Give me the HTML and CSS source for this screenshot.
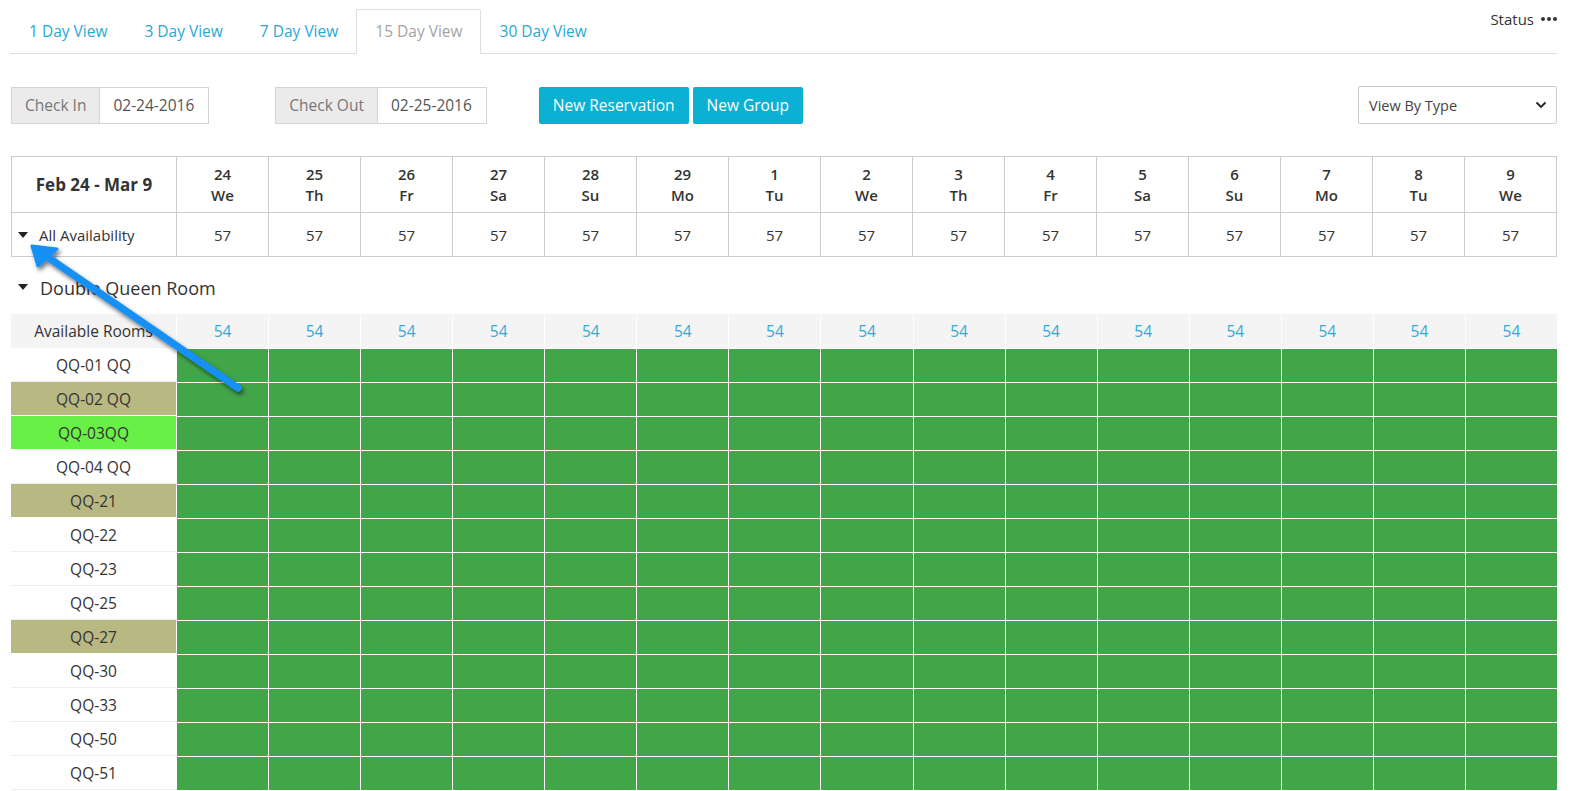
FILE: index.html
```html
<!DOCTYPE html>
<html>
<head>
<meta charset="utf-8">
<link rel="stylesheet" href="styles.css">
</head>
<body>
<div class="page">
  <div class="tabbar">
    <ul class="tabs">
      <li class="tab">1 Day View</li>
      <li class="tab">3 Day View</li>
      <li class="tab">7 Day View</li>
      <li class="tab active">15 Day View</li>
      <li class="tab">30 Day View</li>
    </ul>
    <div class="status">Status <span class="dots"><i></i><i></i><i></i></span></div>
  </div>

  <div class="controls">
    <div class="group">
      <span class="addon">Check In</span>
      <span class="field">02-24-2016</span>
    </div>
    <div class="group group-out">
      <span class="addon">Check Out</span>
      <span class="field">02-25-2016</span>
    </div>
    <div class="buttons">
      <button class="btn">New Reservation</button>
      <button class="btn">New Group</button>
    </div>
    <div class="select">
      <span>View By Type</span>
      <svg width="12" height="8" viewBox="0 0 12 8"><path d="M1.5 1.5 L6 6 L10.5 1.5" fill="none" stroke="#222" stroke-width="1.8"/></svg>
    </div>
  </div>

  <table class="summary">
    <tr class="head">
      <th class="range">Feb 24 - Mar 9</th>
      <th>24<br>We</th><th>25<br>Th</th><th>26<br>Fr</th><th>27<br>Sa</th><th>28<br>Su</th>
      <th>29<br>Mo</th><th>1<br>Tu</th><th>2<br>We</th><th>3<br>Th</th><th>4<br>Fr</th>
      <th>5<br>Sa</th><th>6<br>Su</th><th>7<br>Mo</th><th>8<br>Tu</th><th>9<br>We</th>
    </tr>
    <tr class="avail">
      <td class="label"><span class="caret"></span>All Availability</td>
      <td>57</td><td>57</td><td>57</td><td>57</td><td>57</td><td>57</td><td>57</td><td>57</td>
      <td>57</td><td>57</td><td>57</td><td>57</td><td>57</td><td>57</td><td>57</td>
    </tr>
  </table>

  <div class="section-title"><span class="caret big"></span>Double Queen Room</div>

  <div class="grid" id="grid">
    <div class="rlabel avail-label">Available Rooms</div>
    <div class="num">54</div><div class="num">54</div><div class="num">54</div><div class="num">54</div><div class="num">54</div>
    <div class="num">54</div><div class="num">54</div><div class="num">54</div><div class="num">54</div><div class="num">54</div>
    <div class="num">54</div><div class="num">54</div><div class="num">54</div><div class="num">54</div><div class="num">54</div>
  </div>
</div>

<svg class="annot" width="300" height="420" viewBox="0 0 300 420">
  <defs>
    <filter id="sh" x="-20%" y="-20%" width="140%" height="140%">
      <feDropShadow dx="2" dy="3" stdDeviation="2" flood-color="#000" flood-opacity="0.55"/>
    </filter>
  </defs>
  <g filter="url(#sh)">
    <line x1="238" y1="388" x2="46" y2="256" stroke="#1690f5" stroke-width="7" stroke-linecap="round"/>
    <polygon points="32,246 57,249 38,266" fill="#1690f5" stroke="#1690f5" stroke-width="3" stroke-linejoin="round"/>
  </g>
</svg>

<script src="app.js"></script>
</body>
</html>
```

FILE: app.js
```js
(function () {
  var rooms = [
    ["QQ-01 QQ", ""], ["QQ-02 QQ", "tan"], ["QQ-03QQ", "lime"], ["QQ-04 QQ", ""],
    ["QQ-21", "tan"], ["QQ-22", ""], ["QQ-23", ""], ["QQ-25", ""], ["QQ-27", "tan"],
    ["QQ-30", ""], ["QQ-33", ""], ["QQ-50", ""], ["QQ-51", ""]
  ];
  var grid = document.getElementById("grid");
  rooms.forEach(function (r) {
    var l = document.createElement("div");
    l.className = "rlabel room " + r[1];
    l.textContent = r[0];
    grid.appendChild(l);
    for (var i = 0; i < 15; i++) {
      var c = document.createElement("div");
      c.className = "cell";
      grid.appendChild(c);
    }
  });
})();
```

FILE: styles.css
```css
* { box-sizing: border-box; }
html, body { margin: 0; padding: 0; background: #fff; }
body {
  font-family: "Open Sans", "Liberation Sans", sans-serif;
  color: #333;
  font-size: 15px;
  overflow: hidden;
}
.page { padding: 0 14px 0 11px; }

.tabbar {
  display: flex;
  justify-content: space-between;
  align-items: flex-start;
  border-bottom: 1px solid #ddd;
  padding-top: 9px;
  margin-left: -1px;
}
.tabs { list-style: none; margin: 0; padding: 0; display: flex; }
.tab {
  padding: 10px 17px 10px 18px;
  line-height: 23px;
  color: #2aa8d6;
  font-size: 15.5px;
  border: 1px solid transparent;
  border-bottom: none;
  margin-bottom: -1px;
}
.active {
  color: #a3a3a3;
  background: #fff;
  border-color: #ddd;
  border-bottom: 1px solid #fff;
  border-radius: 2px 2px 0 0;
}
.status { font-size: 15px; color: #333; margin-top: 0; display: flex; align-items: center; }
.dots { display: inline-flex; gap: 2px; margin-left: 7px; }
.dots i { width: 4px; height: 4px; border-radius: 50%; background: #333; display: block; }

.controls {
  display: flex;
  align-items: center;
  margin-top: 32px;
  height: 38px;
}
.group { display: flex; height: 37px; }
.addon {
  background: #ebebeb;
  border: 1px solid #d4d4d4;
  color: #777;
  padding: 0 13px;
  line-height: 35px;
  font-size: 15.5px;
}
.field {
  border: 1px solid #d4d4d4;
  border-left: none;
  color: #555;
  padding: 0 14px 0 13px;
  line-height: 35px;
  font-size: 15.5px;
}
.group-out { margin-left: 66px; }
.buttons { display: flex; gap: 4px; margin-left: 52px; }
.btn {
  background: #0bb0d3;
  color: #fff;
  border: none;
  border-radius: 2px;
  height: 37px;
  padding: 0 14px;
  font-family: "Open Sans", "Liberation Sans", sans-serif;
  font-size: 15.5px;
}
.select {
  margin-left: auto;
  width: 199px;
  height: 38px;
  border: 1px solid #ccc;
  border-radius: 2px;
  display: flex;
  align-items: center;
  justify-content: space-between;
  padding: 0 9px 0 10px;
  font-size: 14.5px;
  color: #444;
}

.summary {
  margin-top: 32px;
  width: 100%;
  border-collapse: collapse;
  table-layout: fixed;
}
.summary th, .summary td {
  border: 1px solid #ccc;
  text-align: center;
  font-size: 15px;
  color: #333;
}
.summary .head th { height: 56px; font-weight: 600; line-height: 21px; }
.summary th.range { width: 165px; font-weight: 700; font-size: 17px; }
.summary .avail td { height: 44px; }
.summary td.label { text-align: left; padding-left: 6px; }
.caret {
  display: inline-block;
  width: 0; height: 0;
  border-left: 5px solid transparent;
  border-right: 5px solid transparent;
  border-top: 6px solid #222;
  margin-right: 11px;
  vertical-align: middle;
  position: relative;
  top: -1px;
}
.caret.big { margin-left: 7px; margin-right: 12px; }

.section-title {
  height: 57px;
  display: flex;
  align-items: center;
  font-size: 18px;
  color: #333;
  padding-top: 4px;
}

.grid {
  display: grid;
  grid-template-columns: 165px repeat(15, 1fr);
  grid-auto-rows: 34px;
}
.rlabel {
  display: flex;
  align-items: center;
  justify-content: center;
  font-size: 15.5px;
  color: #333;
  border-bottom: 1px solid #eee;
}
.avail-label { background: #f4f4f4; border-bottom: none; }
.num {
  background: #f4f4f4;
  border-left: 1px solid #fff;
  color: #34a9d8;
  display: flex;
  align-items: center;
  justify-content: center;
  font-size: 15.5px;
}
.cell {
  background: #42a548;
  border-left: 1px solid #fff;
  border-top: 1px solid #fff;
}
.rlabel.tan { background: #b8b882; border-bottom: 1px solid #fff; }
.rlabel.lime { background: #68f046; border-bottom: 1px solid #fff; }

.annot { position: absolute; left: 0; top: 0; pointer-events: none; }
```
